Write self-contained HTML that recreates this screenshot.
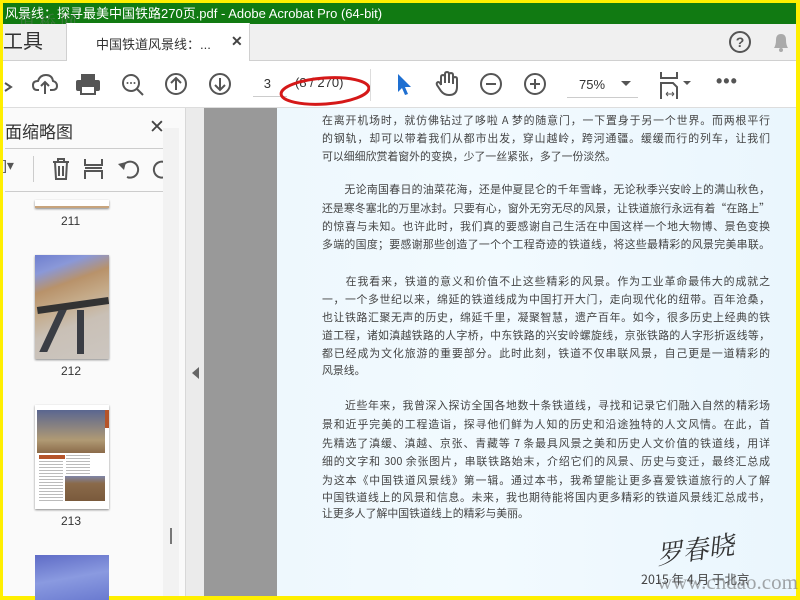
<!DOCTYPE html>
<html><head><meta charset="utf-8"><style>
*{margin:0;padding:0;box-sizing:border-box}
body{width:800px;height:600px;overflow:hidden;background:#ffef00;position:relative;font-family:"Liberation Sans","Noto Sans CJK SC",sans-serif}
.a{position:absolute}
.title{left:3px;top:3px;width:793px;height:21px;background:#117a12;color:#fff;font-size:13px;line-height:21px;padding-left:2px;white-space:nowrap}
.tabs{left:3px;top:24px;width:793px;height:37px;background:#f0f0f0;border-bottom:1px solid #d0d0d0}
.tb{left:3px;top:61px;width:793px;height:47px;background:#fff;border-bottom:1px solid #ddd}
.ic{stroke:#555;fill:none;stroke-width:2}
.left{left:3px;top:108px;width:182px;height:488px;background:#fafafa}
.gut{left:185px;top:108px;width:19px;height:488px;background:#ebebeb;border-left:1px solid #d8d8d8}
.dark{left:204px;top:108px;width:73px;height:488px;background:#999}
.page{left:277px;top:108px;width:519px;height:488px;background:linear-gradient(90deg,#eef8fd,#f2faff 40%,#eaf6fd)}
.ln{position:absolute;left:322px;width:448px;font-size:10.9px;color:#444;text-align:justify;text-align-last:justify;white-space:nowrap;line-height:16px;font-family:"Noto Sans CJK SC",sans-serif}
.ln.s{text-align-last:left}
</style></head><body>
<div class="a title">风景线：探寻最美中国铁路270页.pdf - Adobe Acrobat Pro (64-bit)</div>
<div class="a" style="left:18px;top:8px;font-size:17px;color:rgba(120,120,120,.45);letter-spacing:4px;font-family:'Noto Serif CJK SC',serif">道桥网</div>
<div class="a tabs">
 <div class="a" style="left:0;top:0;width:63px;height:37px;font-size:20px;line-height:37px;color:#333">工具</div>
 <div class="a" style="left:63px;top:-1px;width:184px;height:38px;background:#fff;border-left:1px solid #d0d0d0;border-right:1px solid #d0d0d0"></div>
 <div class="a" style="left:93px;top:10px;font-size:13px;color:#333">中国铁道风景线：...</div>
 <div class="a" style="left:228px;top:9px;font-size:14px;color:#444;font-weight:bold">✕</div>
 <svg class="a" style="left:725px;top:6px" width="24" height="24"><circle cx="12" cy="12" r="10" class="ic"/><text x="12" y="17" font-size="14" font-weight="bold" text-anchor="middle" fill="#555" font-family="Liberation Sans">?</text></svg>
 <svg class="a" style="left:767px;top:6px" width="22" height="24"><path d="M4 18 Q6 15 6 10 Q6 4 11 4 Q16 4 16 10 Q16 15 18 18Z" fill="#aaa"/><circle cx="11" cy="20" r="2" fill="#aaa"/></svg>
</div>
<div class="a tb">
 <svg class="a" style="left:0;top:12px" width="12" height="22"><path d="M2 10 L8 14 L2 18" class="ic"/></svg>
 <svg class="a" style="left:29px;top:11px" width="26" height="24"><path d="M7 18 H5 Q1 18 1 13 Q1 9 6 9 Q8 3 14 3 Q20 3 21 9 Q25 10 25 14 Q25 18 20 18 H18" class="ic"/><path d="M13 22 V10 M9 14 L13 10 L17 14" class="ic"/></svg>
 <svg class="a" style="left:72px;top:11px" width="26" height="24"><rect x="6" y="2" width="14" height="6" fill="#555"/><rect x="1" y="8" width="24" height="11" rx="2" fill="#555"/><rect x="6" y="14" width="14" height="8" fill="#fff" stroke="#555" stroke-width="2"/></svg>
 <svg class="a" style="left:117px;top:11px" width="26" height="26"><circle cx="11" cy="11" r="8" class="ic"/><path d="M17 17 L23 23" class="ic" stroke-width="3"/><circle cx="7.5" cy="11" r="1" fill="#555"/><circle cx="11" cy="11" r="1" fill="#555"/><circle cx="14.5" cy="11" r="1" fill="#555"/></svg>
 <svg class="a" style="left:161px;top:11px" width="24" height="24"><circle cx="12" cy="12" r="10" class="ic"/><path d="M12 18 V6 M7 11 L12 6 L17 11" class="ic"/></svg>
 <svg class="a" style="left:205px;top:11px" width="24" height="24"><circle cx="12" cy="12" r="10" class="ic"/><path d="M12 6 V18 M7 13 L12 18 L17 13" class="ic"/></svg>
 <div class="a" style="left:250px;top:15px;width:34px;height:21px;border-bottom:1px solid #ccc;font-size:13px;color:#333;text-align:right;padding-right:16px">3</div>
 <div class="a" style="left:292px;top:14px;font-size:13px;color:#333">(8 / 270)</div>
 <svg class="a" style="left:272px;top:10px" width="100" height="36"><ellipse cx="50" cy="20" rx="44" ry="13" fill="none" stroke="#d51818" stroke-width="3" transform="rotate(-4 50 20)"/></svg>
 <div class="a" style="left:367px;top:8px;width:1px;height:32px;background:#ddd"></div>
 <svg class="a" style="left:393px;top:11px" width="16" height="24"><path d="M2 2 L2 20 L6 16 L9 23 L12 22 L9 15 L15 15Z" fill="#1e6fd1"/></svg>
 <svg class="a" style="left:432px;top:10px" width="24" height="26"><path d="M6 14 V6 Q6 4 8 4 Q10 4 10 6 V12 M10 12 V3 Q10 1 12 1 Q14 1 14 3 V12 M14 12 V4 Q14 2 16 2 Q18 2 18 4 V13 M18 13 V8 Q18 6 20 6 Q22 6 22 8 V16 Q22 24 14 24 Q9 24 6 20 L2 14 Q1 12 3 11 Q5 11 6 14" class="ic" stroke-width="1.8"/></svg>
 <svg class="a" style="left:476px;top:11px" width="24" height="24"><circle cx="12" cy="12" r="10" class="ic"/><path d="M7 12 H17" class="ic"/></svg>
 <svg class="a" style="left:520px;top:11px" width="24" height="24"><circle cx="12" cy="12" r="10" class="ic"/><path d="M7 12 H17 M12 7 V17" class="ic"/></svg>
 <div class="a" style="left:564px;top:12px;width:71px;height:25px;border-bottom:1px solid #ccc;font-size:13px;color:#333;padding-left:12px;line-height:24px">75%</div>
 <svg class="a" style="left:618px;top:20px" width="10" height="6"><path d="M0 0 H10 L5 5Z" fill="#555"/></svg>
 <svg class="a" style="left:656px;top:10px" width="34" height="28"><path d="M2 1 V7 H18 V1 M2 28 V12 H14 L18 16 V28" class="ic"/><path d="M7 23 H15 M7 23 L9 21 M7 23 L9 25 M15 23 L13 21 M15 23 L13 25" stroke="#555" stroke-width="1"/><path d="M24 10 H32 L28 14Z" fill="#555"/></svg>
 <div class="a" style="left:713px;top:10px;font-size:18px;color:#555;letter-spacing:1px;font-weight:bold">•••</div>
</div>
<div class="a left">
 <div class="a" style="left:2px;top:10px;font-size:17px;color:#333">面缩略图</div>
 <div class="a" style="left:146px;top:8px;font-size:19px;color:#444">✕</div>
 <div class="a" style="left:2px;top:40px;width:169px;height:1px;background:#ccc"></div>
 <div class="a" style="left:0;top:49px;font-size:14px;color:#555">]▾</div>
 <div class="a" style="left:30px;top:48px;width:1px;height:26px;background:#ccc"></div>
 <svg class="a" style="left:48px;top:49px" width="20" height="24"><path d="M2 5 H18 M7 5 V2 H13 V5 M4 5 L5 22 H15 L16 5 M8 9 V19 M12 9 V19" class="ic"/></svg>
 <svg class="a" style="left:80px;top:49px" width="22" height="24"><path d="M2 2 V8 H19 V2 M2 22 V14 H19 V22 M2 11 H19" class="ic"/></svg>
 <svg class="a" style="left:114px;top:50px" width="24" height="22"><path d="M6 8 A8 8 0 1 1 10 19" class="ic" stroke-width="2.5"/><path d="M1 6 L9 4 L7 12Z" fill="#555"/></svg>
 <svg class="a" style="left:148px;top:50px" width="24" height="22"><path d="M18 8 A8 8 0 1 0 14 19" class="ic" stroke-width="2.5"/><path d="M23 6 L15 4 L17 12Z" fill="#555"/></svg>
 <div class="a" style="left:2px;top:83px;width:169px;height:1px;background:#ccc"></div>
 <div class="a" style="left:32px;top:92px;width:74px;height:8px;background:#fff;border-bottom:2px solid #c8a47c;box-shadow:0 1px 2px #888"></div>
 <div class="a" style="left:58px;top:106px;font-size:12px;color:#333">211</div>
 <div class="a" style="left:160px;top:20px;width:16px;height:468px;background:#f2f2f2;top:20px"></div>
 <div class="a" style="left:32px;top:147px;width:74px;height:104px;background:linear-gradient(160deg,#6f7fcf 0%,#8a98d8 15%,#b8926a 30%,#c4a987 45%,#c9c0b6 65%,#ccc6c0 100%);box-shadow:0 1px 2px #888;overflow:hidden">
  <div class="a" style="left:2px;top:47px;width:72px;height:7px;background:#333;transform:rotate(-8deg)"></div>
  <div class="a" style="left:14px;top:55px;width:8px;height:42px;background:#3a3d44;transform:skewX(-25deg)"></div>
  <div class="a" style="left:42px;top:55px;width:7px;height:44px;background:#3a3d44"></div>
 </div>
 <div class="a" style="left:58px;top:256px;font-size:12px;color:#333">212</div>
 <div class="a" style="left:32px;top:297px;width:74px;height:104px;background:#fff;box-shadow:0 1px 2px #888;overflow:hidden">
  <div class="a" style="left:2px;top:5px;width:68px;height:43px;background:linear-gradient(180deg,#5a6690,#b09a74 70%,#8b6b4a)"></div>
  <div class="a" style="left:70px;top:5px;width:4px;height:18px;background:#b5542a"></div>
  <div class="a" style="left:4px;top:50px;width:26px;height:4px;background:#b5542a"></div>
  <div class="a" style="left:4px;top:56px;width:24px;height:40px;background:repeating-linear-gradient(#bbb 0 1px,#fff 1px 3px)"></div>
  <div class="a" style="left:31px;top:50px;width:24px;height:20px;background:repeating-linear-gradient(#bbb 0 1px,#fff 1px 3px)"></div>
  <div class="a" style="left:30px;top:71px;width:40px;height:25px;background:linear-gradient(#7f86a8,#8a6a4a 30%,#7a5a3c)"></div>
 </div>
 <div class="a" style="left:58px;top:406px;font-size:12px;color:#333">213</div>
 <div class="a" style="left:167px;top:420px;width:2px;height:16px;background:#777"></div>
 <div class="a" style="left:32px;top:447px;width:74px;height:45px;background:linear-gradient(170deg,#5f6cc6,#8a9ae0 50%,#6a7ad0)"></div>
</div>
<div class="a gut"><svg class="a" style="left:6px;top:259px" width="8" height="12"><path d="M7 0 V12 L0 6Z" fill="#666"/></svg></div>
<div class="a dark"></div>
<div class="a page"></div>
<div class="ln" style="top:112px">在离开机场时，就仿佛钻过了哆啦 A 梦的随意门，一下置身于另一个世界。而两根平行</div>
<div class="ln" style="top:130px">的钢轨，却可以带着我们从都市出发，穿山越岭，跨河通疆。缓缓而行的列车，让我们</div>
<div class="ln s" style="top:148px">可以细细欣赏着窗外的变换，少了一丝紧张，多了一份淡然。</div>
<div class="ln" style="top:181px">　　无论南国春日的油菜花海，还是仲夏昆仑的千年雪峰，无论秋季兴安岭上的满山秋色，</div>
<div class="ln" style="top:200px">还是寒冬塞北的万里冰封。只要有心，窗外无穷无尽的风景，让铁道旅行永远有着“在路上”</div>
<div class="ln" style="top:218px">的惊喜与未知。也许此时，我们真的要感谢自己生活在中国这样一个地大物博、景色变换</div>
<div class="ln" style="top:236px">多端的国度；要感谢那些创造了一个个工程奇迹的铁道线，将这些最精彩的风景完美串联。</div>
<div class="ln" style="top:273px">　　在我看来，铁道的意义和价值不止这些精彩的风景。作为工业革命最伟大的成就之</div>
<div class="ln" style="top:291px">一，一个多世纪以来，绵延的铁道线成为中国打开大门，走向现代化的纽带。百年沧桑，</div>
<div class="ln" style="top:309px">也让铁路汇聚无声的历史，绵延千里，凝聚智慧，遗产百年。如今，很多历史上经典的铁</div>
<div class="ln" style="top:327px">道工程，诸如滇越铁路的人字桥，中东铁路的兴安岭螺旋线，京张铁路的人字形折返线等，</div>
<div class="ln" style="top:345px">都已经成为文化旅游的重要部分。此时此刻，铁道不仅串联风景，自己更是一道精彩的</div>
<div class="ln s" style="top:362px">风景线。</div>
<div class="ln" style="top:397px">　　近些年来，我曾深入探访全国各地数十条铁道线，寻找和记录它们融入自然的精彩场</div>
<div class="ln" style="top:416px">景和近乎完美的工程造诣，探寻他们鲜为人知的历史和沿途独特的人文风情。在此，首</div>
<div class="ln" style="top:435px">先精选了滇缓、滇越、京张、青藏等 7 条最具风景之美和历史人文价值的铁道线，用详</div>
<div class="ln" style="top:453px">细的文字和 300 余张图片，串联铁路始末，介绍它们的风景、历史与变迁，最终汇总成</div>
<div class="ln" style="top:472px">为这本《中国铁道风景线》第一辑。通过本书，我希望能让更多喜爱铁道旅行的人了解</div>
<div class="ln" style="top:489px">中国铁道线上的风景和信息。未来，我也期待能将国内更多精彩的铁道风景线汇总成书，</div>
<div class="ln s" style="top:505px">让更多人了解中国铁道线上的精彩与美丽。</div>
<div class="a" style="left:656px;top:530px;font-size:26px;color:#333;font-family:'Noto Serif CJK SC',serif;font-style:italic;transform:rotate(-8deg)">罗春晓</div>
<div class="a" style="left:641px;top:569px;font-size:12.5px;color:#444;font-family:'Noto Sans CJK SC',sans-serif">2015 年 4 月 于北京</div>
<div class="a" style="left:657px;top:570px;font-size:21px;color:rgba(110,110,110,.6);font-family:'Liberation Serif',serif">www.cndao.com</div>
</body></html>
